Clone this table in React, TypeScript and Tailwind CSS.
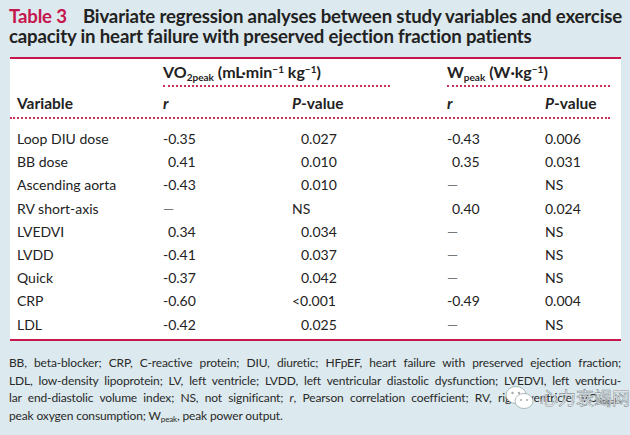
import React from 'react';

const rows: [string, string, string, string, string][] = [
  ['Loop DIU dose', '-0.35', '0.027', '-0.43', '0.006'],
  ['BB dose', '0.41', '0.010', '0.35', '0.031'],
  ['Ascending aorta', '-0.43', '0.010', '—', 'NS'],
  ['RV short-axis', '—', 'NS', '0.40', '0.024'],
  ['LVEDVI', '0.34', '0.034', '—', 'NS'],
  ['LVDD', '-0.41', '0.037', '—', 'NS'],
  ['Quick', '-0.37', '0.042', '—', 'NS'],
  ['CRP', '-0.60', '<0.001', '-0.49', '0.004'],
  ['LDL', '-0.42', '0.025', '—', 'NS'],
];

function Dots({ className }: { className?: string }) {
  return <div className={`h-[2px] border-b-2 border-dotted border-[#c8325a] ${className ?? ''}`} />;
}

function RVal({ v }: { v: string }) {
  if (v === '—') return <span className="text-[#777]">—</span>;
  const pad = !v.startsWith('-');
  return <span className={pad ? 'pl-[5px]' : ''}>{v}</span>;
}

function PVal({ v }: { v: string }) {
  const pad = /^0/.test(v);
  return <span className={pad ? 'pl-[9px]' : ''}>{v}</span>;
}

export default function App() {
  return (
    <div className="relative w-[630px] h-[435px] bg-[#dce9ee] text-[#222] overflow-hidden" style={{ fontFamily: 'Lato, "Open Sans", sans-serif' }}>
      <div className="px-[9px] pt-[6px] text-[18.6px] font-bold leading-[20px] tracking-[-0.15px] text-[#222] whitespace-nowrap">
        <div>
          <span className="text-[#c5164d]">Table 3</span>
          <span className="ml-[16px]">Bivariate regression analyses between study variables and exercise</span>
        </div>
        <div>capacity in heart failure with preserved ejection fraction patients</div>
      </div>

      <div className="mt-[11px] ml-[10px] w-[611px] h-[284px] bg-white border-t-2 border-b-2 border-[#c5164d] text-[14px]">
        <div className="flex pt-[5px] h-[22px] items-end font-bold text-[16px]">
          <div className="w-[153px]" />
          <div className="w-[284px] leading-[18px] whitespace-nowrap">
            VO<sub className="text-[10px] align-baseline relative top-[3px]">2peak</sub> (mL·min<sup className="text-[10px]">−1</sup> kg<sup className="text-[10px]">−1</sup>)
          </div>
          <div className="leading-[18px] whitespace-nowrap">
            W<sub className="text-[10px] align-baseline relative top-[3px]">peak</sub> (W·kg<sup className="text-[10px]">−1</sup>)
          </div>
        </div>
        <div className="flex mt-[4px]">
          <div className="w-[153px]" />
          <Dots className="w-[227px]" />
          <div className="w-[57px]" />
          <Dots className="w-[163px]" />
        </div>
        <div className="grid grid-cols-[153px_129px_155px_98px_1fr] mt-[5px] h-[20px] items-center font-bold text-[15.5px]">
          <div className="pl-[7px]">Variable</div>
          <div className="italic">r</div>
          <div><span className="italic">P</span>-value</div>
          <div className="italic">r</div>
          <div><span className="italic">P</span>-value</div>
        </div>
        <div className="mt-[5px] flex">
          <Dots className="w-[600px]" />
        </div>
        <div className="mt-[8px]">
          {rows.map((r) => (
            <div key={r[0]} className="grid grid-cols-[153px_129px_155px_98px_1fr] h-[23.2px] items-center">
              <div className="pl-[7px]">{r[0]}</div>
              <div><RVal v={r[1]} /></div>
              <div><PVal v={r[2]} /></div>
              <div><RVal v={r[3]} /></div>
              <div>{r[4]}</div>
            </div>
          ))}
        </div>
      </div>

      <div className="px-[9px] pt-[13px] text-[12px] leading-[17.5px] text-[#2a2a2a] tracking-[-0.15px]">
        <div className="whitespace-nowrap text-justify [text-align-last:justify]">
          BB, beta-blocker; CRP, C-reactive protein; DIU, diuretic; HFpEF, heart failure with preserved ejection fraction;
        </div>
        <div className="whitespace-nowrap text-justify [text-align-last:justify]">
          LDL, low-density lipoprotein; LV, left ventricle; LVDD, left ventricular diastolic dysfunction; LVEDVI, left ventricu-
        </div>
        <div className="whitespace-nowrap text-justify [text-align-last:justify]">
          lar end-diastolic volume index; NS, not significant; <i>r</i>, Pearson correlation coefficient; RV, right ventricle; VO<sub className="text-[8px]">2peak</sub>,
        </div>
        <div className="whitespace-nowrap">
          peak oxygen consumption; W<sub className="text-[8px]">peak</sub>, peak power output.
        </div>
      </div>

      <div className="absolute left-[505px] top-[384px] flex items-center gap-[5px] whitespace-nowrap">
        <svg width="30" height="26" viewBox="0 0 30 26">
          <ellipse cx="11" cy="10" rx="10" ry="8.5" fill="white" stroke="#9aa" strokeWidth="0.8" />
          <ellipse cx="19" cy="16" rx="9" ry="7.5" fill="white" stroke="#9aa" strokeWidth="0.8" />
          <circle cx="7.5" cy="8" r="1.2" fill="#aaa" />
          <circle cx="14" cy="8" r="1.2" fill="#aaa" />
          <circle cx="16" cy="15" r="1" fill="#aaa" />
          <circle cx="22" cy="15" r="1" fill="#aaa" />
        </svg>
        <span className="text-[18px] text-white tracking-[0px]" style={{ fontFamily: '"Noto Sans CJK SC", sans-serif', WebkitTextStroke: '0.6px #8a9499' }}>心力衰竭网</span>
      </div>
    </div>
  );
}
